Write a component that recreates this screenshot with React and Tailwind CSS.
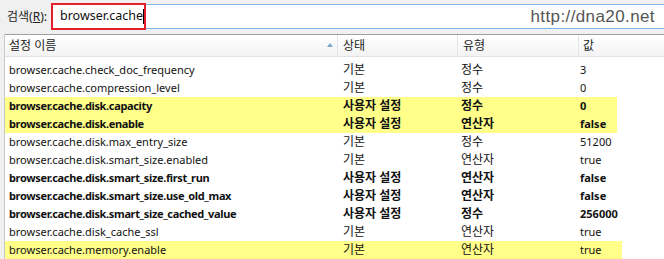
import React from 'react';

const rows = [
  { name: 'browser.cache.check_doc_frequency', state: '기본', type: '정수', value: '3' },
  { name: 'browser.cache.compression_level', state: '기본', type: '정수', value: '0' },
  { name: 'browser.cache.disk.capacity', state: '사용자 설정', type: '정수', value: '0', bold: true, hl: 'w-[612px]' },
  { name: 'browser.cache.disk.enable', state: '사용자 설정', type: '연산자', value: 'false', bold: true, hl: 'w-[612px]' },
  { name: 'browser.cache.disk.max_entry_size', state: '기본', type: '정수', value: '51200' },
  { name: 'browser.cache.disk.smart_size.enabled', state: '기본', type: '연산자', value: 'true' },
  { name: 'browser.cache.disk.smart_size.first_run', state: '사용자 설정', type: '연산자', value: 'false', bold: true },
  { name: 'browser.cache.disk.smart_size.use_old_max', state: '사용자 설정', type: '연산자', value: 'false', bold: true },
  { name: 'browser.cache.disk.smart_size_cached_value', state: '사용자 설정', type: '정수', value: '256000', bold: true },
  { name: 'browser.cache.disk_cache_ssl', state: '기본', type: '연산자', value: 'true' },
  { name: 'browser.cache.memory.enable', state: '기본', type: '연산자', value: 'true', hl: 'w-[617px]' },
];

const font = { fontFamily: '"Noto Sans", "Noto Sans CJK KR", sans-serif' };

export default function App() {
  return (
    <div className="w-[664px] h-[259px] overflow-hidden bg-[#f0f0f0] text-[12px] text-[#111]" style={font}>
      {/* Search bar */}
      <div className="flex items-center h-[34px] relative">
        <span className="pl-[7px] w-[51px] text-[#222]">
          검색(<span className="underline">R</span>):
        </span>
        <div className="flex-1 h-[25px] mt-[-1px] bg-white border border-[#7eb4ea] border-r-0 flex items-center">
          <div className="h-[27px] w-[95px] -ml-px border-2 border-[#e2202c] flex items-center pl-[7px] text-[12.5px] text-[#111]">
            browser.cache<span className="w-px h-[15px] bg-black" />
          </div>
          <span className="ml-auto pr-[9px] text-[17px] text-[#555] tracking-[0.4px]" style={{ fontFamily: '"Liberation Sans", sans-serif' }}>
            http://dna20.net
          </span>
        </div>
      </div>

      {/* List */}
      <div className="ml-[4px] bg-white border-l border-[#c8c8c8] h-[225px]">
        <div className="flex h-[23px] items-center border-t border-[#a0a0a0] border-b border-b-[#e2e2e2] bg-gradient-to-b from-white to-[#f3f3f3] text-[#222]">
          <div className="w-[333px] h-full flex items-center pl-[4px] border-r border-[#e5e5e5] relative">
            설정 이름
            <span className="absolute right-[4px] top-[8px] w-0 h-0 border-l-[3px] border-r-[3px] border-b-[4px] border-l-transparent border-r-transparent border-b-[#7aa9c9]" />
          </div>
          <div className="w-[120px] h-full flex items-center pl-[5px] border-r border-[#e5e5e5]">상태</div>
          <div className="w-[121px] h-full flex items-center pl-[5px] border-r border-[#e5e5e5]">유형</div>
          <div className="flex-1 h-full flex items-center pl-[4px]">값</div>
        </div>
        <div className="pt-[4px]">
          {rows.map((r) => (
            <div
              key={r.name}
              className={`flex h-[18px] items-baseline leading-[18px] ${r.bold ? 'font-bold' : ''} ${r.hl ? `${r.hl} bg-[#ffff8a]` : ''}`}
            >
              <div className={`w-[334px] pl-[4px] whitespace-nowrap text-[11px] ${r.bold ? 'tracking-[-0.35px]' : ''}`}>{r.name}</div>
              <div className="w-[120px] pl-[4px]">{r.state}</div>
              <div className="w-[121px] pl-[2px]">{r.type}</div>
              <div className="text-[11px]">{r.value}</div>
            </div>
          ))}
        </div>
      </div>
    </div>
  );
}
